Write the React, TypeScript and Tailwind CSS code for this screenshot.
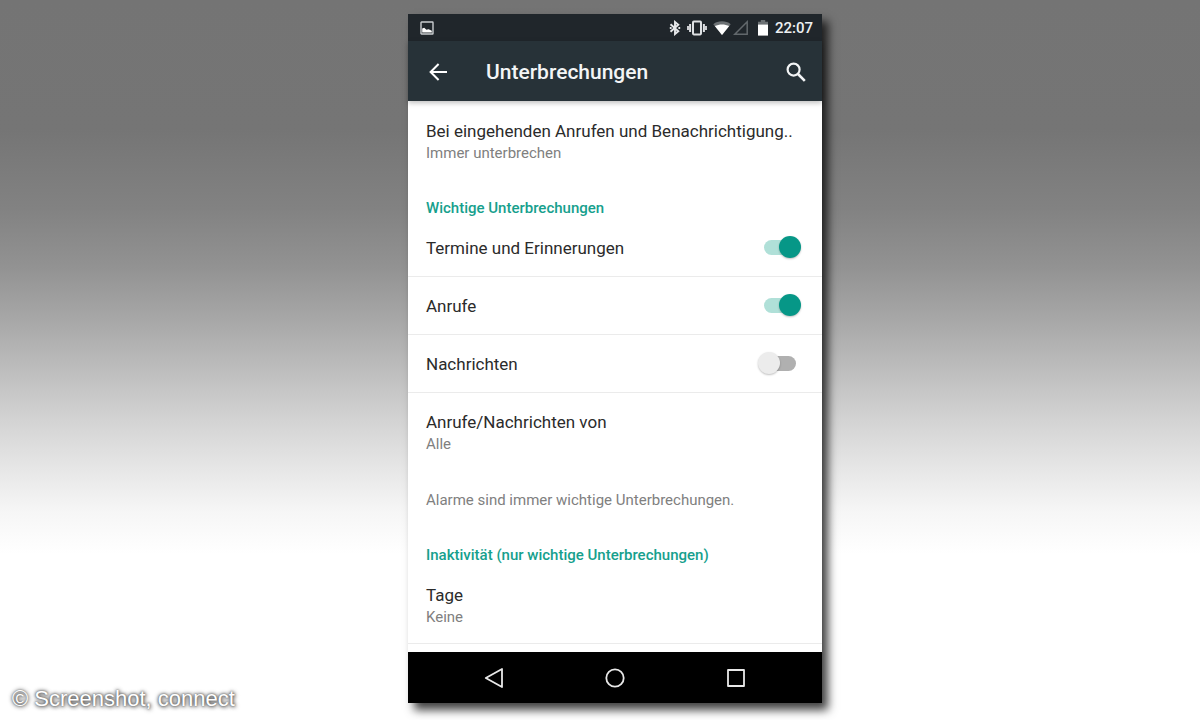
import React, { useState } from 'react';

const ImageIcon = () => (
  <svg className="h-3.5 w-3.5" viewBox="0 0 14 14" fill="none">
    <rect x="1" y="1" width="12" height="12" rx="0.5" stroke="#c9cdd0" strokeWidth="1.4" />
    <path d="M2.2 11.6V7.6L4.2 6.8L6.4 8.8L8.6 8.2L11.8 9.8V11.6Z" fill="#fff" />
  </svg>
);

const BluetoothIcon = () => (
  <svg className="h-4 w-3" viewBox="0 0 12 16" fill="none" stroke="#e6e8ea" strokeWidth="1.9">
    <path d="M1.5 4.2L9.3 11.2L6 14V2L9.3 4.8L1.5 11.8" />
    <path d="M0.8 8H2.6M9.4 8H11.2" />
  </svg>
);

const VibrateIcon = () => (
  <svg className="h-4 w-5" viewBox="0 0 20 16" fill="none" stroke="#dfe2e4">
    <rect x="6" y="1.6" width="8" height="12.8" rx="0.8" strokeWidth="2" />
    <path d="M3.1 4V12M16.9 4V12" strokeWidth="2" />
    <path d="M1 6V10M19 6V10" strokeWidth="1.8" />
  </svg>
);

const WifiIcon = () => (
  <svg className="h-4 w-[18px]" viewBox="0 0 18 16">
    <path d="M0.3 4.2C5 0.4 13 0.4 17.7 4.2L9 15Z" fill="#6c7174" />
    <path d="M1.8 6C6 3.9 12 3.9 16.2 6L9 15Z" fill="#fff" />
  </svg>
);

const SignalIcon = () => (
  <svg className="h-4 w-4" viewBox="0 0 16 16" fill="none">
    <path d="M1.8 14.2H14.2V1.8Z" stroke="#62686c" strokeWidth="1.5" />
  </svg>
);

const BatteryIcon = () => (
  <svg className="h-4 w-3" viewBox="0 0 12 16">
    <path d="M1 1.8H3.8V0H8.2V1.8H11V6H1Z" fill="#6c7174" />
    <path d="M1 4.6H11V15.6H1Z" fill="#fff" />
  </svg>
);

const BackArrow = () => (
  <svg className="h-5 w-5" viewBox="0 0 20 20" fill="none" stroke="#fff" strokeWidth="2">
    <path d="M19 10H3M10.6 2L2.6 10L10.6 18" />
  </svg>
);

const SearchIcon = () => (
  <svg className="h-5 w-5" viewBox="0 0 20 20" fill="none" stroke="#f3f5f6">
    <circle cx="7.6" cy="7.6" r="6" strokeWidth="2.2" />
    <path d="M12 12L18.8 18.8" strokeWidth="2.6" />
  </svg>
);

const SectionTitle: React.FC<{ children: React.ReactNode }> = ({ children }) => (
  <h2 className="pt-[18px] px-[18px] text-[15px] leading-[22px] font-medium text-[#16a08d]">{children}</h2>
);

interface EntryProps {
  title: string;
  value: string;
}

const Entry: React.FC<EntryProps> = ({ title, value }) => (
  <button type="button" className="block w-full px-[18px] pt-[18px] pb-[15px] text-left">
    <span className="block whitespace-nowrap text-[17px] leading-[22px] text-[#2b2b2b]">{title}</span>
    <span className="block text-[15px] leading-[22px] text-[#808080]">{value}</span>
  </button>
);

interface ToggleRowProps {
  label: string;
  defaultOn?: boolean;
}

const ToggleRow: React.FC<ToggleRowProps> = ({ label, defaultOn = false }) => {
  const [on, setOn] = useState(defaultOn);

  return (
    <label className="flex h-[58px] items-center justify-between border-b border-[#ebebeb] pl-[18px] pr-[26px]">
      <span className="text-[17px] leading-[22px] text-[#2b2b2b]">{label}</span>
      <input
        type="checkbox"
        role="switch"
        checked={on}
        onChange={(e) => setOn(e.target.checked)}
        className="relative h-[15px] w-8 appearance-none rounded-full bg-[#b0b0b0] checked:bg-[#b0e0d8] before:absolute before:-top-1 before:-left-1.5 before:h-[22px] before:w-[22px] before:rounded-full before:bg-[#ececec] before:shadow-[0_1px_2px_rgba(0,0,0,0.25)] checked:before:left-[15px] checked:before:bg-[#069787]"
      />
    </label>
  );
};

const NavBar = () => (
  <nav className="flex h-[51px] items-center justify-center gap-[41px] bg-black">
    <button type="button" aria-label="Zurück" className="flex h-full w-20 items-center justify-center">
      <svg className="h-5 w-5" viewBox="0 0 20 20" fill="none" stroke="#e8e8e8" strokeWidth="1.8" strokeLinejoin="round">
        <path d="M18 1V19L1.8 10Z" />
      </svg>
    </button>
    <button type="button" aria-label="Startseite" className="flex h-full w-20 items-center justify-center">
      <svg className="h-5 w-5" viewBox="0 0 20 20" fill="none" stroke="#e8e8e8" strokeWidth="1.8">
        <circle cx="10" cy="10" r="8.7" />
      </svg>
    </button>
    <button type="button" aria-label="Übersicht" className="flex h-full w-20 items-center justify-center">
      <svg className="h-5 w-5" viewBox="0 0 20 20" fill="none" stroke="#e8e8e8" strokeWidth="1.8" strokeLinejoin="round">
        <rect x="2" y="2" width="16" height="16" />
      </svg>
    </button>
  </nav>
);

export default function App() {
  return (
    <div className="relative flex min-h-screen items-start justify-center bg-[linear-gradient(#747474_0%,#757575_18%,#828282_29%,#929292_37%,#a9a9a9_45%,#bcbcbc_51%,#d2d2d2_58%,#e6e6e6_65%,#f6f6f6_71%,#ffffff_77%)] pt-3.5 pb-4 pl-[30px] font-[Roboto,sans-serif]">
      <main className="w-full max-w-[414px] bg-white shadow-[6px_7px_9px_rgba(0,0,0,0.75)]">
        <div className="flex h-[27px] items-center justify-between bg-[#20262b] pl-3 pr-[9px]">
          <ImageIcon />
          <div className="flex items-center">
            <BluetoothIcon />
            <span className="ml-1.5 mr-1.5"><VibrateIcon /></span>
            <WifiIcon />
            <span className="ml-0.5 mr-2"><SignalIcon /></span>
            <span className="mr-1.5"><BatteryIcon /></span>
            <span className="text-[15px] leading-5 font-medium text-[#eef0f1]">22:07</span>
          </div>
        </div>

        <header className="relative flex h-[60px] items-center bg-[#273238] pt-0.5 pl-5 pr-4 shadow-[0_2px_5px_rgba(0,0,0,0.25)]">
          <button type="button" aria-label="Nach oben">
            <BackArrow />
          </button>
          <h1 className="ml-[38px] flex-1 text-[21px] leading-7 font-medium text-[#f3f5f6]">Unterbrechungen</h1>
          <button type="button" aria-label="Suchen">
            <SearchIcon />
          </button>
        </header>

        <div className="pt-px pb-2">
          <Entry title="Bei eingehenden Anrufen und Benachrichtigung.." value="Immer unterbrechen" />

          <SectionTitle>Wichtige Unterbrechungen</SectionTitle>
          <ToggleRow label="Termine und Erinnerungen" defaultOn />
          <ToggleRow label="Anrufe" defaultOn />
          <ToggleRow label="Nachrichten" />
          <Entry title="Anrufe/Nachrichten von" value="Alle" />
          <p className="px-[18px] pt-[19px] pb-[15px] text-[15px] leading-[22px] text-[#808080]">
            Alarme sind immer wichtige Unterbrechungen.
          </p>

          <SectionTitle>Inaktivität (nur wichtige Unterbrechungen)</SectionTitle>
          <div className="border-b border-[#ebebeb]">
            <Entry title="Tage" value="Keine" />
          </div>
        </div>

        <NavBar />
      </main>

      <p className="absolute bottom-[7px] left-3 font-['Liberation_Sans',sans-serif] text-[22px] leading-7 text-white [text-shadow:0_0_2px_#555,0_0_4px_#555,1px_1px_4px_#777]">
        © Screenshot, connect
      </p>
    </div>
  );
}
